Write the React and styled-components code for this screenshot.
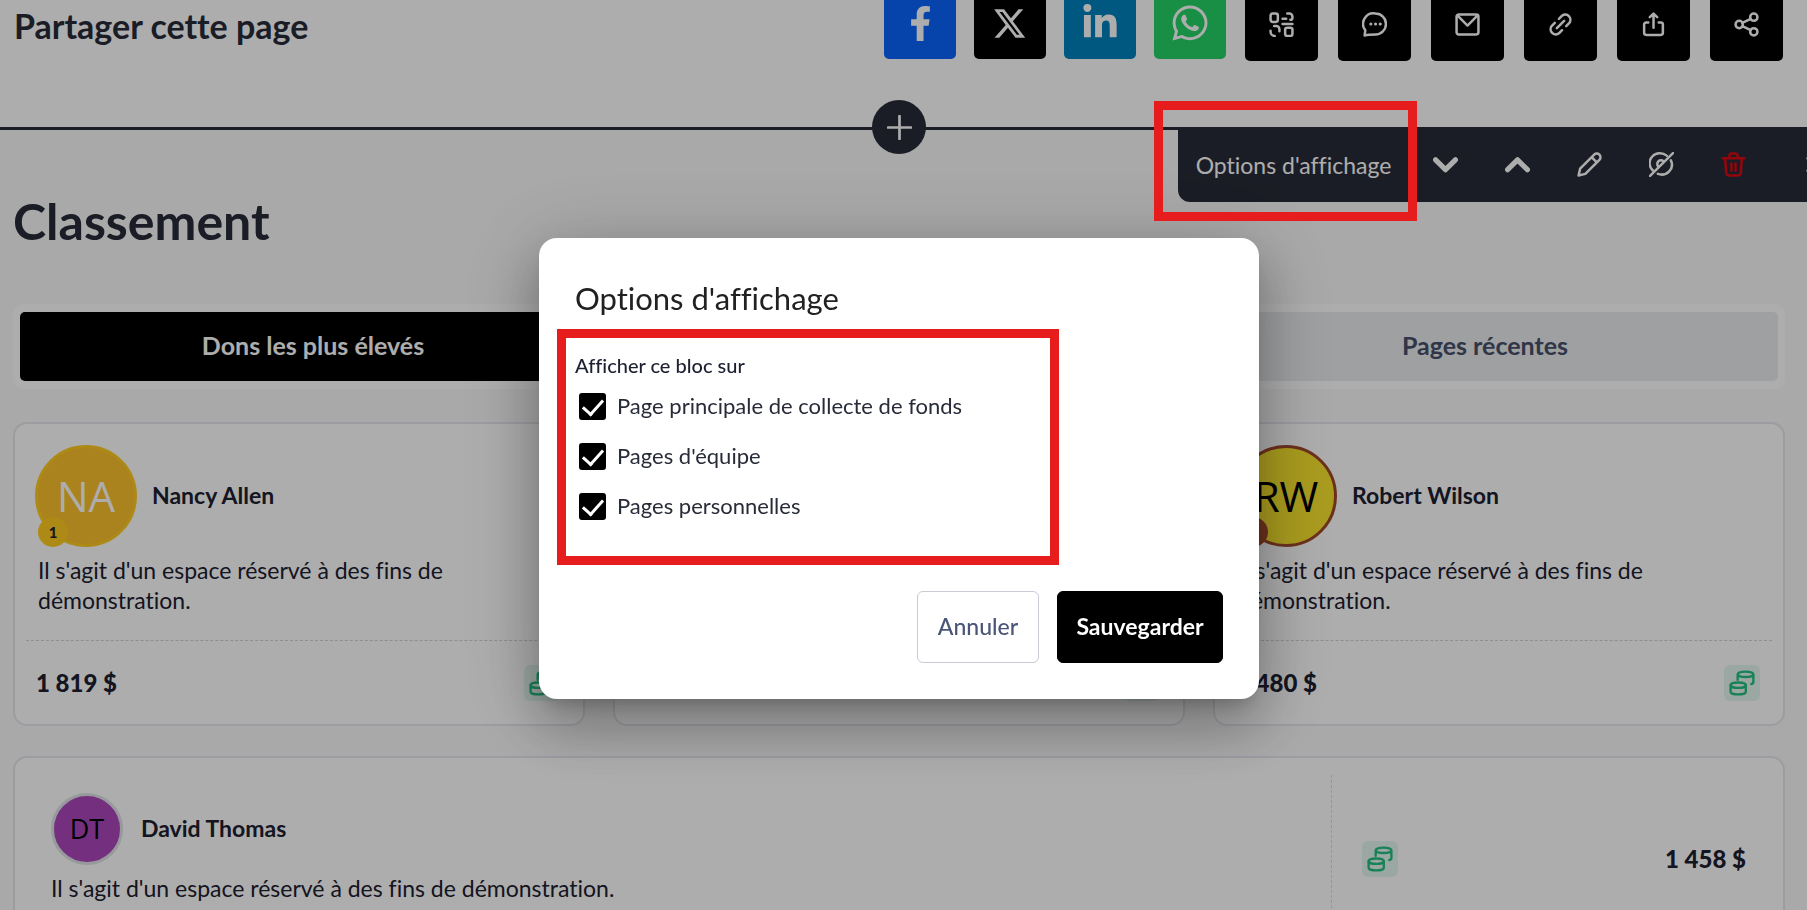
import React, { useState } from 'react';
import styled, { createGlobalStyle } from 'styled-components';
import { FaFacebookF, FaLinkedinIn, FaWhatsapp } from 'react-icons/fa';

const GlobalStyle = createGlobalStyle`
  * {
    box-sizing: border-box;
  }

  body {
    margin: 0;
    font-family: Lato, 'Open Sans', sans-serif;
    font-size: 22px;
    font-variant-ligatures: none;
    line-height: 30px;
    color: #1c2030;
  }

  button {
    font-family: inherit;
    font-variant-ligatures: none;
    cursor: pointer;
  }
`;

const Page = styled.div`
  height: 100vh;
  overflow: hidden;
  background: #ffffff;
`;

const ShareBar = styled.section`
  display: flex;
  align-items: center;
  justify-content: space-between;
  margin-top: -13px;
  padding: 0 24px 66px 14px;
`;

const ShareTitle = styled.h2`
  margin: 0;
  padding-top: 4px;
  font-size: 34px;
  line-height: 70px;
  font-weight: 700;
  color: #282b38;
`;

const ShareList = styled.div`
  display: flex;
  gap: 20px;
`;

const SocialList = styled.div`
  display: flex;
  gap: 18px;
  margin-right: -1px;
`;

const ShareButton = styled.button`
  display: flex;
  align-items: center;
  justify-content: center;
  width: ${props => props.$size || 73}px;
  height: ${props => props.$size || 74}px;
  padding: 0;
  border: none;
  border-radius: 5px;
  background: ${props => props.$color || '#000000'};
  color: #ffffff;
`;

const Block = styled.section`
  border-top: 3px solid #282b38;
  background: #f9f9f9;
  height: 100%;
  padding: 0 22px 0 13px;
`;

const AddRow = styled.div`
  display: flex;
  justify-content: center;
  height: 0;
`;

const AddButton = styled.button`
  position: relative;
  display: flex;
  align-items: center;
  justify-content: center;
  width: 54px;
  height: 54px;
  margin-top: -30px;
  padding: 0;
  border: none;
  border-radius: 50%;
  background: #282b38;
  color: #ffffff;
`;

const BlockHeader = styled.header`
  display: flex;
  align-items: flex-start;
  justify-content: space-between;
  margin-top: -3px;
  margin-right: -56px;
`;

const BlockTitle = styled.h1`
  margin: 0;
  padding: 64px 0 53px;
  font-size: 50px;
  line-height: 60px;
  font-weight: 700;
  color: #282b38;
`;

const Toolbar = styled.div`
  display: flex;
  height: 75px;
  border-bottom-left-radius: 12px;
  background: #282b38;
`;

const ToolbarButton = styled.button`
  display: flex;
  align-items: center;
  justify-content: center;
  width: 72px;
  padding: 0;
  border: none;
  background: transparent;
  color: ${props => (props.$danger ? '#d80a12' : '#ffffff')};
`;

const OptionsButton = styled(ToolbarButton)`
  position: relative;
  width: 231px;
  font-size: 23px;

  &::after {
    content: '';
    position: absolute;
    inset: -26px -8px -19px -24px;
    z-index: 20;
    border: 9px solid #e71d1d;
  }
`;

const Tabs = styled.div`
  display: grid;
  grid-template-columns: repeat(3, 1fr);
  padding: 8px 7px;
  border-radius: 10px;
  background: #ffffff;
`;

const Tab = styled.button`
  height: 69px;
  padding: 0 6px 4px;
  border: none;
  border-radius: ${props => (props.$active ? '5px' : '0 5px 5px 0')};
  background: ${props => (props.$active ? '#000000' : '#e9ecef')};
  color: ${props => (props.$active ? '#ffffff' : '#475069')};
  font-size: 25px;
  font-weight: 700;
`;

const Cards = styled.div`
  display: grid;
  grid-template-columns: repeat(3, 1fr);
  gap: 28px;
  margin: 33px 0 30px;
`;

const Card = styled.article`
  display: flex;
  flex-direction: column;
  height: 304px;
  padding: 0 12px;
  border: 2px solid #e6e7ee;
  border-radius: 14px;
  background: #ffffff;
`;

const CardBody = styled.div`
  flex: 1;
  padding: 21px 8px 0;
`;

const Person = styled.div`
  display: flex;
  align-items: center;
  gap: ${props => props.$gap || 15}px;
`;

const PersonName = styled.strong`
  padding-bottom: 2px;
  font-size: 23px;
  font-weight: 700;
`;

const AvatarBox = styled.div`
  position: relative;
`;

const Avatar = styled.div`
  display: flex;
  align-items: center;
  justify-content: center;
  width: ${props => props.$size}px;
  height: ${props => props.$size}px;
  border: 3px solid ${props => props.$ring};
  border-radius: 50%;
  background: ${props => props.$color};
  color: ${props => props.$text || '#000000'};
  font-family: 'Open Sans', 'Noto Sans', sans-serif;
  font-size: ${props => (props.$size > 80 ? 42 : 27)}px;
`;

const Rank = styled.span`
  position: absolute;
  left: 3px;
  bottom: 0;
  width: 30px;
  height: 30px;
  border-radius: 50%;
  background: ${props => props.$color};
  font-size: 15px;
  font-weight: 900;
  text-align: center;
`;

const Message = styled.p`
  margin: 8px 0 0;
  padding: 0 3px;
  max-width: 460px;
  font-size: 23px;
`;

const CardFooter = styled.footer`
  display: flex;
  align-items: center;
  justify-content: space-between;
  height: 84px;
  margin: 0 -1px;
  padding: 0 12px 0 10px;
  border-top: 1px dashed #cfd1da;
`;

const Amount = styled.span`
  font-size: 24px;
  font-weight: 900;
`;

const CoinTile = styled.span`
  display: flex;
  align-items: center;
  justify-content: center;
  width: 36px;
  height: 36px;
  margin-left: auto;
  border-radius: 6px;
  background: #e4f7f1;
  color: #26bf80;
`;

const WideCard = styled.article`
  display: flex;
  height: 206px;
  padding: 17px 37px 17px 36px;
  border: 2px solid #e6e7ee;
  border-radius: 14px;
  background: #ffffff;
`;

const WideBody = styled.div`
  flex: 1;
  padding-top: 18px;
`;

const WideMessage = styled.p`
  margin: 8px 0 0;
  font-size: 23px;
`;

const WideAmount = styled.div`
  display: flex;
  flex-direction: row-reverse;
  align-items: center;
  justify-content: space-between;
  width: 25%;
  max-width: 415px;
  padding-left: 30px;
  border-left: 1px dashed #dcdde3;

  ${CoinTile} {
    margin: 0;
  }
`;

const Backdrop = styled.div`
  position: fixed;
  inset: 0;
  z-index: 10;
  display: flex;
  align-items: center;
  justify-content: center;
  padding: 27px 9px 0 0;
  background: rgba(0, 0, 0, 0.32);
`;

const Dialog = styled.form`
  width: 720px;
  padding: 42px 36px 36px;
  border-radius: 18px;
  background: #ffffff;
  box-shadow:
    0 12px 17px -8px rgba(0, 0, 0, 0.2),
    0 27px 52px 4px rgba(0, 0, 0, 0.2),
    0 10px 80px 10px rgba(0, 0, 0, 0.16);
`;

const DialogTitle = styled.h2`
  margin: 0 0 13px;
  font-size: 31px;
  line-height: 36px;
  font-weight: 400;
  color: #212121;
`;

const Fieldset = styled.fieldset`
  display: flex;
  flex-direction: column;
  gap: 20px;
  max-width: 502px;
  height: 236px;
  margin: 0 0 26px -18px;
  padding: 12px 9px;
  border: 9px solid #e71d1d;
`;

const Legend = styled.span`
  margin-bottom: -9px;
  font-size: 20px;
  font-weight: 500;
`;

const CheckRow = styled.label`
  display: flex;
  align-items: center;
  gap: 11px;
  padding-left: 4px;
  color: #282b38;
`;

const Checkbox = styled.input`
  appearance: none;
  width: 27px;
  height: 27px;
  margin: 0;
  border: 2px solid #000000;
  border-radius: 3px;
  display: grid;
  place-items: center;
  cursor: pointer;

  &:checked {
    background: #000000;
  }

  &:checked::before {
    content: '';
    width: 9px;
    height: 17px;
    margin-bottom: 5px;
    border: solid #ffffff;
    border-width: 0 3px 3px 0;
    transform: rotate(42deg);
  }
`;

const Actions = styled.div`
  display: flex;
  justify-content: flex-end;
  gap: 18px;
`;

const ActionButton = styled.button`
  min-width: ${props => (props.$primary ? 166 : 122)}px;
  height: 72px;
  padding: 0 16px 2px;
  border: 1px solid ${props => (props.$primary ? '#000000' : '#c9cad6')};
  border-radius: 6px;
  background: ${props => (props.$primary ? '#000000' : '#ffffff')};
  color: ${props => (props.$primary ? '#ffffff' : '#4a5578')};
  font-size: 23px;
  font-weight: ${props => (props.$primary ? 700 : 500)};
`;

const iconPaths = {
  plus: <path d="M12 1v22M1 12h22" />,
  qr: (
    <>
      <rect x="1.500" y="1.500" width="7" height="8" rx="2" />
      <rect x="15.500" y="15" width="7" height="8" rx="2" />
      <path d="M17.500 1.500h2a3 3 0 0 1 3 3v1a2 2 0 0 1-2 2M13 6.500h3.500M13 11.500h9.500M5 13.500h2a3 3 0 0 1 3 3v2M1.500 18v1a4 4 0 0 0 4 4" />
    </>
  ),
  chat: (
    <>
      <path d="M13 1.500a10 10 0 0 1 0 20c-4 0-8 .3-10.500 1l.7-5A10 10 0 0 1 13 1.500Z" />
      <path d="M8.500 11.500h.01M13 11.500h.01M17.500 11.500h.01" strokeWidth="3" />
    </>
  ),
  mail: (
    <>
      <rect x="1.500" y="2.500" width="21" height="19" rx="2" />
      <path d="m3 4 9 9 9-9" />
    </>
  ),
  link: (
    <path d="m8.500 15.500 7-7M10.500 6.500l3-3a5 5 0 0 1 7 7l-3 3M6.500 10.500l-3 3a5 5 0 0 0 7 7l3-3" />
  ),
  upload: <path d="M12 15V2M8.500 5 12 1.500 15.500 5M7 10H5a2 2 0 0 0-2 2v8a2 2 0 0 0 2 2h14a2 2 0 0 0 2-2v-8a2 2 0 0 0-2-2h-2" />,
  share: (
    <>
      <circle cx="5" cy="12" r="3.500" />
      <circle cx="19" cy="5" r="3.500" />
      <circle cx="19" cy="19" r="3.500" />
      <path d="m8 10.500 8-4M8 13.500l8 4" />
    </>
  ),
  down: <path d="m2.500 7.500 9.500 9.500 9.500-9.500" strokeWidth="5" />,
  up: <path d="m2.500 17 9.500-9.500 9.500 9.500" strokeWidth="5" />,
  pencil: <path d="m1.500 22.500 1.500-6.500L16.500 2.500a3 3 0 0 1 5 5L8 21ZM14 5l5 5" />,
  hidden: (
    <>
      <path d="M23 1 1 23M17 3.500A10 9.500 0 0 0 3.500 17.500M21 8A10 9.500 0 0 1 8.500 21" />
      <path d="M14 9a3.500 3.500 0 0 0-5 5" />
    </>
  ),
  trash: (
    <path d="M1.500 6h21M4 6l1 14a3 3 0 0 0 3 2.500h8a3 3 0 0 0 3-2.500l1-14M8 6V4a2.500 2.500 0 0 1 2.500-2.500h3A2.500 2.500 0 0 1 16 4v2M10 11v7M14 11v7" />
  ),
  more: <path d="m14 6 8 12M14 18l8-12" />,
  coins: (
    <>
      <ellipse cx="8.500" cy="14" rx="7" ry="2.500" />
      <path d="M1.500 14v6c0 1.500 3 2.500 7 2.500s7-1 7-2.500v-6" />
      <path d="M8 9V4c0-1.500 3-2.500 7.200-2.500S22.500 2.500 22.500 4v7c0 1-.7 1.700-2 2M8 4c0 1.500 3 2.500 7.200 2.500S22.500 5.500 22.500 4" />
    </>
  ),
};

function Icon({ name, size = 27, stroke = 2 }) {
  return (
    <svg
      width={size}
      height={size}
      viewBox="0 0 24 24"
      fill="none"
      stroke="currentColor"
      strokeWidth={stroke}
      strokeLinecap="round"
      strokeLinejoin="round"
      aria-hidden="true"
    >
      {iconPaths[name]}
    </svg>
  );
}

function XLogo() {
  return (
    <svg width="32" height="31" viewBox="0 0 24 24" fill="currentColor" aria-hidden="true">
      <path d="M18.600 1h3.700l-8.100 9.200L23.800 23h-7.500l-5.900-7.700L3.700 23H0l8.700-9.900L-.3 1h7.700l5.300 7ZM17.300 20.800h2.100L6.100 3.100H3.900Z" />
    </svg>
  );
}

const shareActions = [
  { icon: 'qr', label: 'Code QR' },
  { icon: 'chat', label: 'Message' },
  { icon: 'mail', label: 'Courriel' },
  { icon: 'link', label: 'Lien' },
  { icon: 'upload', label: 'Exporter' },
  { icon: 'share', label: 'Partager' },
];

const toolbarActions = [
  { icon: 'down', label: 'Descendre' },
  { icon: 'up', label: 'Monter' },
  { icon: 'pencil', label: 'Modifier' },
  { icon: 'hidden', label: 'Masquer' },
  { icon: 'trash', label: 'Supprimer', danger: true },
  { icon: 'more', label: 'Fermer' },
];

const message = "Il s'agit d'un espace réservé à des fins de démonstration.";

function DonorCard({ initials, name, rank, amount, color, ring, text }) {
  return (
    <Card>
      <CardBody>
        {name && (
          <>
            <Person>
              <AvatarBox>
                <Avatar $size={102} $color={color} $ring={ring} $text={text}>{initials}</Avatar>
                <Rank $color={ring}>{rank}</Rank>
              </AvatarBox>
              <PersonName>{name}</PersonName>
            </Person>
            <Message>{message}</Message>
          </>
        )}
      </CardBody>
      <CardFooter>
        {amount && <Amount>{amount}</Amount>}
        <CoinTile><Icon name="coins" size={26} stroke={2.2} /></CoinTile>
      </CardFooter>
    </Card>
  );
}

function App() {
  const [pages, setPages] = useState([
    { label: 'Page principale de collecte de fonds', checked: true },
    { label: "Pages d'équipe", checked: true },
    { label: 'Pages personnelles', checked: true },
  ]);

  const togglePage = (label) => {
    setPages(pages.map(page => (
      page.label === label ? { ...page, checked: !page.checked } : page
    )));
  };

  return (
    <>
      <GlobalStyle />
      <Page>
        <ShareBar>
          <ShareTitle>Partager cette page</ShareTitle>
          <ShareList>
            <SocialList>
              <ShareButton $size={72} $color="#0965fe" aria-label="Facebook"><FaFacebookF size={35} /></ShareButton>
              <ShareButton $size={72} aria-label="X"><XLogo /></ShareButton>
              <ShareButton $size={72} $color="#0080bb" aria-label="LinkedIn"><FaLinkedinIn size={38} /></ShareButton>
              <ShareButton $size={72} $color="#25d366" aria-label="WhatsApp"><FaWhatsapp size={40} /></ShareButton>
            </SocialList>
            {shareActions.map(action => (
              <ShareButton key={action.icon} aria-label={action.label}>
                <Icon name={action.icon} size={25} stroke={2.4} />
              </ShareButton>
            ))}
          </ShareList>
        </ShareBar>

        <Block>
          <AddRow>
            <AddButton aria-label="Ajouter un bloc"><Icon name="plus" size={25} stroke={2.6} /></AddButton>
          </AddRow>
          <BlockHeader>
            <BlockTitle>Classement</BlockTitle>
            <Toolbar>
              <OptionsButton>Options d'affichage</OptionsButton>
              {toolbarActions.map(action => (
                <ToolbarButton key={action.icon} aria-label={action.label} $danger={action.danger}>
                  <Icon name={action.icon} size={25} stroke={2.4} />
                </ToolbarButton>
              ))}
            </Toolbar>
          </BlockHeader>

          <Tabs>
            <Tab $active>Dons les plus élevés</Tab>
            <Tab />
            <Tab>Pages récentes</Tab>
          </Tabs>

          <Cards>
            <DonorCard
              initials="NA"
              name="Nancy Allen"
              rank="1"
              amount="1 819 $"
              color="#fbc02d"
              ring="#ffcb20"
              text="#ffffff"
            />
            <DonorCard />
            <DonorCard
              initials="RW"
              name="Robert Wilson"
              amount="1 480 $"
              color="#fae62d"
              ring="#a0492a"
            />
          </Cards>

          <WideCard>
            <WideBody>
              <Person $gap={18}>
                <Avatar $size={72} $color="#ab47bc" $ring="#e0e2e6">DT</Avatar>
                <PersonName>David Thomas</PersonName>
              </Person>
              <WideMessage>{message}</WideMessage>
            </WideBody>
            <WideAmount>
              <Amount>1 458 $</Amount>
              <CoinTile><Icon name="coins" size={26} stroke={2.2} /></CoinTile>
            </WideAmount>
          </WideCard>
        </Block>
      </Page>

      <Backdrop>
        <Dialog role="dialog" aria-labelledby="dialog-title" onSubmit={e => e.preventDefault()}>
          <DialogTitle id="dialog-title">Options d'affichage</DialogTitle>
          <Fieldset aria-labelledby="pages-legend">
            <Legend id="pages-legend">Afficher ce bloc sur</Legend>
            {pages.map(page => (
              <CheckRow key={page.label}>
                <Checkbox
                  type="checkbox"
                  checked={page.checked}
                  onChange={() => togglePage(page.label)}
                />
                {page.label}
              </CheckRow>
            ))}
          </Fieldset>
          <Actions>
            <ActionButton type="button">Annuler</ActionButton>
            <ActionButton type="submit" $primary>Sauvegarder</ActionButton>
          </Actions>
        </Dialog>
      </Backdrop>
    </>
  );
}

export default App;
